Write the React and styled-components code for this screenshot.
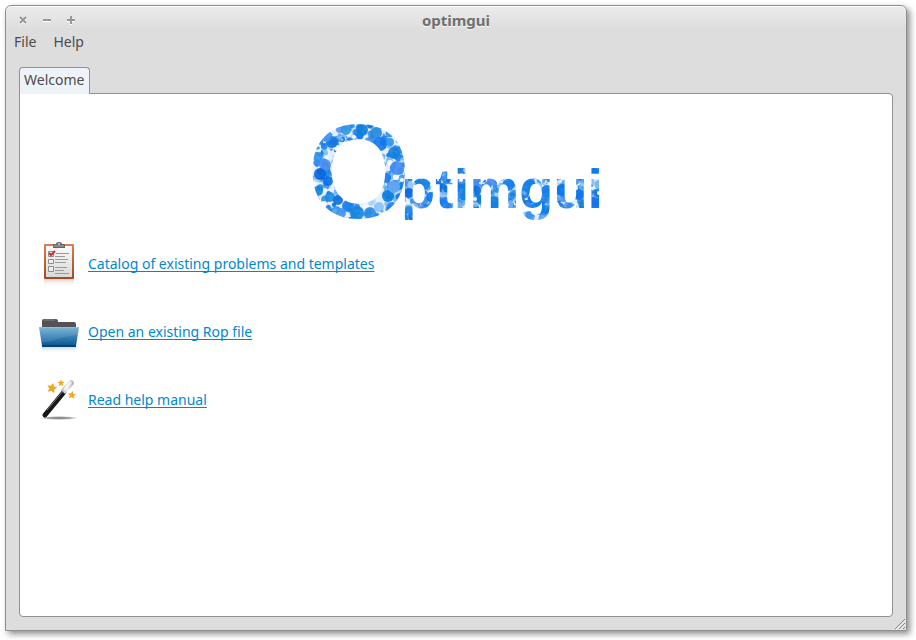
import React from "react";
import styled, { createGlobalStyle } from "styled-components";

const GlobalStyle = createGlobalStyle`
  * { box-sizing: border-box; }
  body {
    margin: 0;
    background: #fff;
    font-family: "Noto Sans", "Open Sans", sans-serif;
    font-size: 14px;
    line-height: 20px;
    color: #4c4c4c;
  }
`;

const Desktop = styled.div`
  display: flex;
  min-height: 100vh;
  padding: 5px 9px 9px 5px;
`;

const Window = styled.div`
  flex: 1;
  display: flex;
  flex-direction: column;
  border: 1px solid #8e8e8e;
  border-radius: 6px 6px 0 0;
  background: linear-gradient(#ececec, #dddddd 24px);
  box-shadow: 3px 3px 6px rgba(0, 0, 0, 0.45), inset 0 1px 0 #fff;
`;

const TitleBar = styled.header`
  display: grid;
  grid-template-columns: 1fr auto 1fr;
  align-items: center;
  height: 28px;
  padding: 0 9px;
`;

const WindowButtons = styled.div`
  display: flex;
  gap: 8px;
`;

const WindowButton = styled.button`
  display: flex;
  width: 16px;
  height: 16px;
  padding: 0;
  border: 0;
  background: none;

  svg {
    stroke: #989898;
    stroke-width: 2;
    fill: none;
    filter: drop-shadow(0 1px 0 #fff);
  }
`;

const Title = styled.h1`
  margin: 0;
  font-size: 15px;
  line-height: 20px;
  font-weight: 700;
  color: #6f6f6f;
  text-shadow: 0 1px 0 #f8f8f8;
`;

const MenuBar = styled.nav`
  display: flex;
  gap: 17px;
  height: 24px;
  padding: 0 8px;
  align-items: flex-start;
`;

const MenuItem = styled.button`
  padding: 0;
  border: 0;
  background: none;
  font: inherit;
  line-height: 16px;
  color: inherit;
`;

const Notebook = styled.main`
  flex: 1;
  display: flex;
  flex-direction: column;
  padding: 9px 13px 0;
`;

const TabList = styled.div`
  display: flex;
  margin-bottom: -1px;
  z-index: 1;
`;

const Tab = styled.button`
  height: 27px;
  padding: 0 5px 2px 4px;
  border: 1px solid #8e9296;
  border-bottom: 0;
  border-radius: 4px 4px 0 0;
  background: #edf3f9;
  font: inherit;
  color: inherit;
`;

const Panel = styled.section`
  flex: 1;
  border: 1px solid #919191;
  border-radius: 0 4px 4px 4px;
  background: #fff;
  padding: 28px 15px;
`;

const LogoRow = styled.div`
  display: flex;
  justify-content: center;
  margin-bottom: 18px;

  svg {
    overflow: visible;
  }
`;

const ActionList = styled.ul`
  display: grid;
  gap: 20px;
  margin: 0;
  padding: 0;
  list-style: none;
`;

const Action = styled.li`
  display: flex;
  align-items: center;
  gap: 5px;
  height: 48px;
`;

const ActionLink = styled.a`
  color: #0088cf;
  text-decoration: underline 1px;
  text-underline-offset: 2px;
  text-decoration-skip-ink: none;
`;

const GripRow = styled.footer`
  display: flex;
  justify-content: flex-end;
  align-items: flex-end;
  height: 13px;
`;

const blues = ["#0f7be0", "#1677f5", "#2586e8", "#4a8cf5", "#0b6fe0", "#70b2f3", "#1480d8", "#3a97ee", "#a3cdf8"];

function makeBubbles(count, x, y, width, height, smallest, largest, seed) {
  let state = seed;
  const next = () => {
    state = (state * 16807) % 2147483647;
    return state / 2147483647;
  };
  return Array.from({ length: count }, () => ({
    cx: x + next() * width,
    cy: y + next() * height,
    r: smallest + next() * (largest - smallest),
    fill: blues[Math.floor(next() * blues.length)],
    opacity: 0.55 + next() * 0.45,
  }));
}

const scattered = [
  ...makeBubbles(440, 312, 122, 92, 100, 1, 4, 4127),
  ...makeBubbles(700, 402, 166, 200, 56, 1, 5, 9931),
];

const largeBubbles = [
  [362, 130, 6, "#0c7ddd"], [346, 130, 5, "#2f97e4"], [332, 142, 6, "#1475dd"],
  [326, 136, 6, "#3e91f5"], [376, 133, 6, "#2587dd"], [380, 144, 7, "#1178ed"],
  [390, 142, 4, "#2e93ea"], [394, 153, 6, "#1380df"], [397, 168, 7, "#438bf5"],
  [318, 157, 5, "#2e93e7"], [325, 165, 6, "#4a8ef0"], [320, 174, 6, "#0864dd"],
  [328, 181, 5, "#0a70e6"], [318, 191, 5, "#1582e0"], [330, 197, 5, "#1b8ae2"],
  [338, 200, 5, "#0c6edb"], [348, 206, 6, "#1b80ea"], [357, 213, 7, "#1584dd"],
  [341, 213, 5, "#4094f4"], [370, 213, 6, "#2b8de7"], [379, 207, 5, "#8bc1f4"],
  [388, 196, 6, "#087edb"], [386, 178, 5, "#1478fa"], [394, 187, 6, "#65a8f3"],
  [392, 207, 5, "#1f83ec"], [409, 193, 5, "#0968e2"], [409, 210, 4, "#2587e6"],
  [424, 184, 6, "#1684e3"], [431, 197, 5, "#0872ee"], [445, 203, 6, "#1879f5"],
  [463, 194, 6, "#1682e7"], [492, 181, 5, "#478af5"], [494, 202, 6, "#0c7de0"],
  [508, 185, 6, "#1782ef"], [529, 186, 7, "#1680e8"], [538, 208, 7, "#087deb"],
  [547, 191, 6, "#127ded"], [562, 190, 6, "#0875ec"], [579, 195, 5, "#1575eb"],
  [594, 172, 4, "#0879e5"], [594, 203, 6, "#1272ee"],
];

const gaps = [
  [337, 148, 3], [319, 151, 2], [326, 157, 2], [315, 184, 2], [325, 190, 2],
  [390, 163, 3], [402, 180, 2], [396, 177, 3], [324, 204, 3], [366, 207, 3],
  [384, 214, 2], [354, 137, 2], [414, 186, 1], [404, 203, 2], [415, 213, 2],
  [438, 180, 1], [452, 195, 2], [461, 180, 2], [475, 199, 2], [480, 183, 1],
  [508, 205, 1], [518, 199, 2], [525, 210, 2], [543, 186, 1], [558, 204, 1],
  [576, 188, 2], [599, 193, 2], [586, 181, 1],
];

function Logo() {
  return (
    <svg width="290" height="100" viewBox="311 122 290 100" role="img" aria-label="Optimgui">
      <clipPath id="wordmark">
        <text x="307" y="218" fontFamily="Liberation Sans, Arial, sans-serif" fontWeight="700" fontSize="133">O</text>
        <text x="401" y="208" fontFamily="Liberation Sans, Arial, sans-serif" fontWeight="700" fontSize="56">ptimgui</text>
      </clipPath>
      <g clipPath="url(#wordmark)">
        <rect x="311" y="122" width="292" height="100" fill="#e4f0fd" />
        {scattered.map((b, i) => <circle key={i} {...b} />)}
        {gaps.map(([cx, cy, r], i) => <circle key={i} cx={cx} cy={cy} r={r} fill="#f4f9ff" />)}
        {largeBubbles.map(([cx, cy, r, fill], i) => (
          <circle key={i} cx={cx} cy={cy} r={r} fill={fill} opacity="0.9" />
        ))}
      </g>
    </svg>
  );
}

function ClipboardIcon() {
  return (
    <svg width="48" height="48" viewBox="0 0 48 48" aria-hidden="true">
      <defs>
        <linearGradient id="wood" x2="0" y2="1"><stop stopColor="#d98052" /><stop offset="1" stopColor="#a44a1e" /></linearGradient>
        <linearGradient id="paper" x2="0" y2="1"><stop stopColor="#fafafa" /><stop offset="1" stopColor="#d9d9d9" /></linearGradient>
        <linearGradient id="boardFade" x2="0" y2="1"><stop stopColor="#c7b5ac" stopOpacity=".6" /><stop offset="1" stopColor="#fff" stopOpacity="0" /></linearGradient>
      </defs>
      <rect x="9" y="39" width="30" height="8" fill="url(#boardFade)" />
      <rect x="9" y="4" width="30" height="35" rx="1" fill="url(#wood)" />
      <rect x="11" y="6" width="26" height="31" fill="url(#paper)" />
      <path d="M18 8V5q0-1 2-1h1q0-2 3-2t3 2h1q2 0 2 1v3z" fill="#666" />
      <path d="M19 6h10" stroke="#aaa" />
      <circle cx="24" cy="4" r="1" fill="#d5d5d5" />
      <path d="M13.500 11.500h5v5h-5zM13.500 19.500h5v4h-5zM13.500 26.500h5v5h-5z" fill="#eee" stroke="#8c8c8c" />
      <path d="m14 13 2 2 4-4" fill="none" stroke="#e2222d" strokeWidth="2" />
      <path d="M21 13.500h13M20 16.500h10M20 19.500h13M20 22.500h11M20 27.500h12M20 30.500h9M20 33.500h14" stroke="#9b9b9b" />
    </svg>
  );
}

function FolderIcon() {
  return (
    <svg width="48" height="48" viewBox="0 0 48 48" aria-hidden="true">
      <defs>
        <linearGradient id="folder" x2="0" y2="1"><stop stopColor="#72acd2" /><stop offset=".5" stopColor="#347fb3" /><stop offset="1" stopColor="#075188" /></linearGradient>
        <linearGradient id="folderFade" x2="0" y2="1"><stop stopColor="#a8cbe2" stopOpacity=".6" /><stop offset="1" stopColor="#fff" stopOpacity="0" /></linearGradient>
      </defs>
      <path d="M7 39h34l-1 7H8z" fill="url(#folderFade)" />
      <path d="M7 20v-7q0-2 2-2h12q2 0 2 3h16q2 0 2 2v4z" fill="#535355" />
      <path d="M9 12h11" stroke="#858585" />
      <path d="M4 19h40l-3 19q0 1-1 1H8q-1 0-1-1z" fill="url(#folder)" />
      <path d="M7 38h34" stroke="#034377" strokeWidth="2" />
      <path d="M4 19h40l-1 8Q28 28 14 34H6z" fill="#fff" opacity=".1" />
      <path d="M4 19.500h40" stroke="#91bedc" />
    </svg>
  );
}

function WandIcon() {
  const star = "m0-5 1.500 3.300 3.500.2-2.600 2.400.8 3.600L0 2.700l-3.200 1.800.8-3.600L-5-1.500l3.500-.2z";
  return (
    <svg width="48" height="48" viewBox="0 0 48 48" aria-hidden="true">
      <defs>
        <radialGradient id="ground"><stop stopColor="#777" /><stop offset=".6" stopColor="#aaa" /><stop offset="1" stopColor="#ddd" stopOpacity="0" /></radialGradient>
        <linearGradient id="tip"><stop stopColor="#aaa" /><stop offset=".5" stopColor="#eee" /><stop offset="1" stopColor="#aaa" /></linearGradient>
      </defs>
      <ellipse cx="24" cy="42" rx="20" ry="2" fill="url(#ground)" />
      <path d="M10 39 29 16" stroke="#171719" strokeWidth="5" strokeLinecap="round" />
      <path d="M12 34 29 14" stroke="#777" />
      <path d="m26 14 8-9q2-2 4 0t0 4l-8 9z" fill="url(#tip)" />
      <path d="m29 14 7-8" stroke="#f6f6f6" strokeWidth="2" />
      <g fill="#f5a916" stroke="#d98904" strokeWidth=".5">
        <path d={star} transform="translate(17 12) rotate(12) scale(.9)" />
        <path d={star} transform="translate(26 7) scale(.6)" />
        <path d={star} transform="translate(37 19) rotate(8) scale(.7)" />
      </g>
    </svg>
  );
}

const windowControls = [
  { label: "Close", path: "m5 5 6 6M11 5l-6 6" },
  { label: "Minimize", path: "M4 8h8" },
  { label: "Maximize", path: "M4 8h8M8 4v8" },
];

const actions = [
  { Icon: ClipboardIcon, href: "#catalog", text: "Catalog of existing problems and templates" },
  { Icon: FolderIcon, href: "#open", text: "Open an existing Rop file" },
  { Icon: WandIcon, href: "#help", text: "Read help manual" },
];

export default function App() {
  return (
    <>
      <GlobalStyle />
      <Desktop>
        <Window>
          <TitleBar>
            <WindowButtons>
              {windowControls.map(({ label, path }) => (
                <WindowButton key={label} type="button" aria-label={label}>
                  <svg width="16" height="16" viewBox="0 0 16 16"><path d={path} /></svg>
                </WindowButton>
              ))}
            </WindowButtons>
            <Title>optimgui</Title>
          </TitleBar>
          <MenuBar>
            <MenuItem type="button">File</MenuItem>
            <MenuItem type="button">Help</MenuItem>
          </MenuBar>
          <Notebook>
            <TabList role="tablist">
              <Tab type="button" role="tab" id="welcome-tab" aria-selected="true" aria-controls="welcome">Welcome</Tab>
            </TabList>
            <Panel role="tabpanel" id="welcome" aria-labelledby="welcome-tab">
              <LogoRow><Logo /></LogoRow>
              <ActionList>
                {actions.map(({ Icon, href, text }) => (
                  <Action key={href}>
                    <Icon />
                    <ActionLink href={href}>{text}</ActionLink>
                  </Action>
                ))}
              </ActionList>
            </Panel>
          </Notebook>
          <GripRow>
            <svg width="12" height="12" viewBox="0 0 12 12" aria-hidden="true">
              <path d="M1 11 11 1M5 11l6-6M9 11l2-2" stroke="#888" />
              <path d="M2 12 12 2M6 12l6-6" stroke="#fff" strokeWidth=".5" />
            </svg>
          </GripRow>
        </Window>
      </Desktop>
    </>
  );
}
